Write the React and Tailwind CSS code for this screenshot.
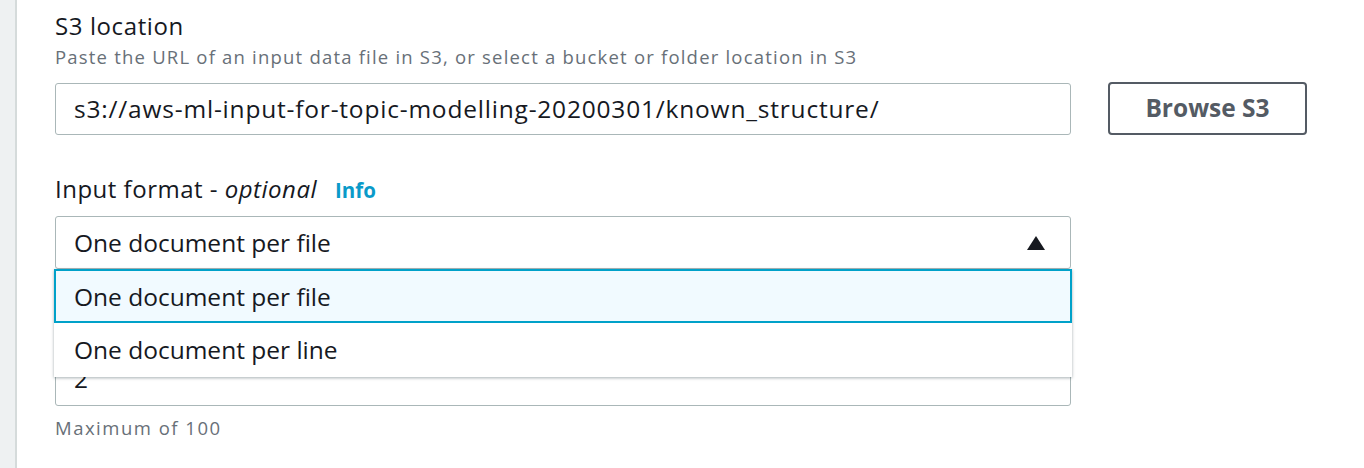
export default function App() {
    return (
        <div
            className="flex h-[468px] w-[1364px] bg-white text-[#16191f]"
            style={{ fontFamily: '"Open Sans", "Noto Sans", sans-serif' }}
        >
            {/* side rail */}
            <div className="w-[17px] shrink-0 border-r-2 border-[#d5dbdb] bg-[#eef1f2]" />

            <div className="flex-1 pl-[38px] pt-[11px]">
                {/* S3 location */}
                <div>
                    <p className="text-[24px] leading-[30px] tracking-[0.6px]">S3 location</p>
                    <p className="mt-[4px] text-[18.5px] leading-[24px] tracking-[1.2px] text-[#687078]">
                        Paste the URL of an input data file in S3, or select a
                        bucket or folder location in S3
                    </p>
                    <div className="mt-[13px] flex items-center">
                        <div className="flex h-[52px] w-[1016px] items-center rounded-[3px] border border-[#aab7b8] px-[18px] pt-[2px] text-[24.5px] tracking-[0.8px]">
                            s3://aws-ml-input-for-topic-modelling-20200301/known_structure/
                        </div>
                        <button className="ml-[37px] h-[53px] w-[199px] rounded-[4px] border-2 border-[#545b64] text-[24.5px] font-bold text-[#545b64]">
                            Browse S3
                        </button>
                    </div>
                </div>

                {/* Input format */}
                <div className="mt-[39px]">
                    <p className="flex items-baseline text-[24px] leading-[30px] tracking-[0.5px]">
                        <span>
                            Input format - <i>optional</i>
                        </span>
                        <span className="ml-[18px] text-[20.5px] font-bold tracking-normal text-[#0a9ac9]">
                            Info
                        </span>
                    </p>
                    <div className="relative mt-[11px] w-[1016px]">
                        <div className="flex h-[53px] items-center justify-between rounded-[3px] border border-[#aab7b8] px-[18px] pt-[2px] text-[24.5px]">
                            <span>One document per file</span>
                            <svg width="18" height="14" viewBox="0 0 18 14" className="mr-[7px] mb-[2px]">
                                <path d="M9 0L18 14H0Z" fill="#16191f" />
                            </svg>
                        </div>

                        {/* field hidden under the open menu */}
                        <div className="mt-[84px] flex h-[53px] items-center rounded-[3px] border border-[#aab7b8] px-[18px] text-[24.5px]">
                            2
                        </div>
                        <p className="mt-[10px] text-[18.5px] leading-[24px] tracking-[1.5px] text-[#687078]">
                            Maximum of 100
                        </p>

                        {/* open menu */}
                        <div className="absolute left-[-1px] right-[-1px] top-[53px] bg-white shadow-[0_1px_3px_rgba(0,28,36,0.35)]">
                            <div className="flex h-[54px] items-center border-2 border-[#00a1c9] bg-[#f1faff] px-[18px] pt-[2px] text-[24.5px]">
                                One document per file
                            </div>
                            <div className="flex h-[54px] items-center px-[20px] text-[24.5px]">
                                One document per line
                            </div>
                        </div>
                    </div>
                </div>
            </div>
        </div>
    );
}
